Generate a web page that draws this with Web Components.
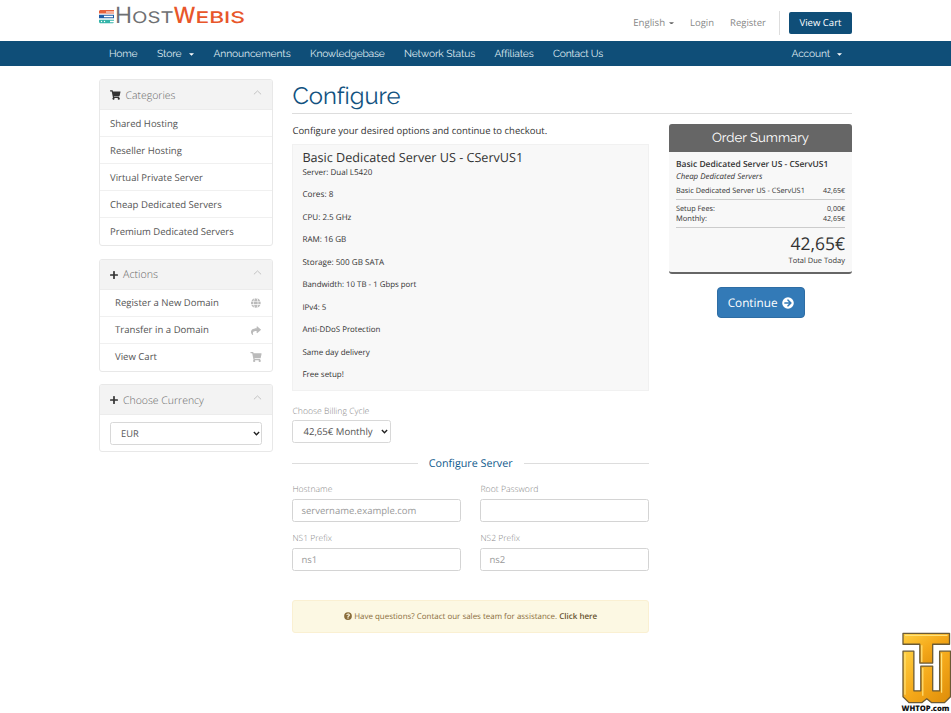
<!DOCTYPE html>
<html lang="en">
<head>
<meta charset="utf-8">
<title>Configure - HostWebis</title>
<style>
html,body{margin:0;background:#fff}
body{font-family:"Open Sans",sans-serif;font-size:9.25px;color:#333;width:951px;height:713px;overflow:hidden;position:relative;text-rendering:geometricPrecision}
main{display:flex;gap:20px;width:753px;margin:0 0 0 99px;padding-top:13px}
aside{flex:0 0 174px;margin-right:-.6px}
</style>
</head>
<body>
<site-header></site-header>
<site-nav></site-nav>
<main>
  <aside>
    <side-panel icon="cart" label="Categories" w="50">
      <side-item><t-x w="68">Shared Hosting</t-x></side-item>
      <side-item><t-x w="72">Reseller Hosting</t-x></side-item>
      <side-item><t-x w="93">Virtual Private Server</t-x></side-item>
      <side-item><t-x w="112">Cheap Dedicated Servers</t-x></side-item>
      <side-item><t-x w="124">Premium Dedicated Servers</t-x></side-item>
    </side-panel>
    <side-panel icon="plus" label="Actions" w="35">
      <side-item icon="globe"><t-x w="104">Register a New Domain</t-x></side-item>
      <side-item icon="share"><t-x w="94">Transfer in a Domain</t-x></side-item>
      <side-item icon="cart"><t-x w="42">View Cart</t-x></side-item>
    </side-panel>
    <side-panel icon="plus" label="Choose Currency" w="81">
      <select-box style="margin:6.500px 10px 6px" pad="11" label="EUR"></select-box>
    </side-panel>
  </aside>
  <config-page></config-page>
</main>
<brand-badge></brand-badge>
<script>
const ICONS = {
  cart: ['0 0 576 512','<path d="M528 301 575 93c4-15-8-29-23-29H160l-9-45C148 8 138 0 127 0H24C11 0 0 11 0 24v16c0 13 11 24 24 24h70l70 343a56 56 0 1 0 67 9h210a56 56 0 1 0 64-10l5-25c4-15-8-29-23-29H218l-7-32h293c11 0 21-8 24-19z"/>'],
  plus: ['0 0 448 512','<path d="M416 208H272V64c0-18-14-32-32-32h-32c-18 0-32 14-32 32v144H32c-18 0-32 14-32 32v32c0 18 14 32 32 32h144v144c0 18 14 32 32 32h32c18 0 32-14 32-32V304h144c18 0 32-14 32-32v-32c0-18-14-32-32-32z"/>'],
  globe: ['0 0 512 512','<path d="M336 160C322 66 287 8 248 8s-74 58-88 152zM152 256c0 22 1 44 3 64h186a650 650 0 0 0 0-128H155c-2 20-3 42-3 64zm325-96A249 249 0 0 0 319 18c24 34 41 85 50 142zM177 18A248 248 0 0 0 19 160h108c9-57 26-108 50-142zM487 192H373a683 683 0 0 1 0 128h114a247 247 0 0 0 0-128zM120 256c0-22 1-43 3-64H9a249 249 0 0 0 0 128h114c-2-21-3-42-3-64zm40 96c14 94 49 152 88 152s74-58 88-152zm159 142a248 248 0 0 0 158-142H369c-9 57-26 108-50 142zM19 352a249 249 0 0 0 158 142c-24-34-41-85-50-142z"/>'],
  share: ['0 0 512 512','<path d="M504 226 328 74c-15-13-40-2-40 18v80C127 174 0 206 0 358c0 61 39 122 83 154 14 10 33-3 28-19-45-145 22-184 177-186v88c0 20 25 31 40 18l176-152c11-9 11-26 0-35z"/>'],
  arrow: ['0 0 512 512','<path fill-rule="evenodd" d="M256 8a248 248 0 1 1 0 496 248 248 0 0 1 0-496zm-29 144 71 72H120c-13 0-24 11-24 24v16c0 13 11 24 24 24h178l-71 72c-9 10-9 25 0 34l11 11c10 9 25 9 34 0l132-132c9-9 9-24 0-34L272 107c-9-9-24-9-34 0l-11 11c-9 9-9 25 0 34z"/>'],
  question: ['0 0 512 512','<path fill-rule="evenodd" d="M256 8a248 248 0 1 1 0 496 248 248 0 0 1 0-496zm8 82c-55 0-90 23-117 64-4 5-2 12 3 16l34 27c6 4 13 3 17-2 18-23 30-36 58-36 20 0 46 13 46 33 0 15-12 23-32 34-24 13-55 30-55 71v6c0 7 5 12 12 12h56c7 0 12-5 12-12v-1c0-29 84-30 84-109 0-59-61-103-118-103zm-8 248a46 46 0 1 0 0 92 46 46 0 0 0 0-92z"/>'],
  up: ['0 0 12 7','<path d="M1 6 6 1.3 11 6" fill="none" stroke="currentColor" stroke-width="1.200"/>'],
  down: ['0 0 12 8','<path d="M1.500 1.500 6 6l4.500-4.500" fill="none" stroke="currentColor" stroke-width="2.400"/>'],
  caret: ['0 0 8 4','<path d="M0 0h8L4 4z"/>']
};
function define(name, render) {
  customElements.define(name, class extends HTMLElement {
    constructor() { super(); this.attachShadow({mode: 'open'}); }
    connectedCallback() {
      if (this.shadowRoot.firstChild) return;
      const t = document.createElement('template');
      t.innerHTML = render(this);
      this.shadowRoot.append(t.content.cloneNode(true));
      if (this.hasAttribute('w') && name === 't-x') fit(this);
    }
  });
}
/* Sets a label to a given width: by font size, or by tracking when "ls" is present. */
function fit(el) {
  const w = +el.getAttribute('w'), s = el.shadowRoot.querySelector('span');
  const n = s.getBoundingClientRect().width;
  if (!n) return;
  if (el.hasAttribute('ls')) s.style.letterSpacing = (w - n) / el.textContent.length + 'px';
  else s.style.fontSize = parseFloat(getComputedStyle(s).fontSize) * w / n + 'px';
}
define('t-x', () => `<style>:host{display:inline-block;white-space:nowrap;flex:none}</style><span><slot></slot></span>`);
define('ui-icon', e => { const [vb, d] = ICONS[e.getAttribute('name')];
  return `<style>:host{display:inline-block;flex:none;line-height:0}svg{display:block;width:100%;height:100%;fill:currentColor}</style><svg viewBox="${vb}">${d}</svg>`; });

define('site-logo', () => `<style>
:host{display:block;width:147px;height:28px}
svg{display:block}text{font-family:"Inter",sans-serif}
.h{fill:#6e7073;font-weight:400}.w{fill:#e8562a;font-weight:500}
</style><svg width="147" height="28" viewBox="0 0 147 28"><g transform="translate(0 9.500)"><path fill="#e5603a" d="M1 .5h6v3.500H0V1.500zM7 .5h8V2H7z"/><path fill="#e5603a" d="M7 3h8v1H7z"/><path fill="#1d5da6" d="M0 5.300h5v3.500H0zM5 5.300h10v1H5zM5 7.800h10v1H5zM14 6h1v2h-1z"/><path fill="#35b5aa" d="M0 10.200h11v3.500H1l-1-1zM11 10.200h4v1h-4zM11 12.700h4l-1 1h-3z"/><circle cx="2.500" cy="12" r=".7" fill="#fff"/><circle cx="5.500" cy="12" r=".7" fill="#fff"/></g>
<text class="h" x="16" y="23" font-size="22.500" textLength="17" lengthAdjust="spacingAndGlyphs">H</text><text class="h" x="33" y="23" font-size="16" textLength="41.500" lengthAdjust="spacingAndGlyphs">OST</text><text class="w" x="74.500" y="23" font-size="22.500" textLength="22" lengthAdjust="spacingAndGlyphs">W</text><text class="w" x="96.500" y="23" font-size="16" textLength="49.500" lengthAdjust="spacingAndGlyphs">EBIS</text></svg>`);

define('site-header', () => `<style>
:host{display:flex;width:753px;height:41px;margin-left:99px;justify-content:space-between;color:#888}
nav{display:flex;align-items:center;height:45px}
nav > t-x{margin-bottom:1px}
ui-icon{width:5px;height:2.800px;margin:1px 16px 0 4px;color:#666}
.l{margin-right:16px}
.b{display:flex;align-items:center;height:24px;border-left:1px solid #ddd;padding-left:9px;margin-left:-3px}
button{all:unset;box-sizing:border-box;width:63px;height:22px;background:#0f4e78;border-radius:2px;color:#fff;text-align:center;line-height:22px}
</style><site-logo></site-logo><nav><t-x w="32">English</t-x><ui-icon name="caret"></ui-icon><t-x class="l" w="24">Login</t-x><t-x class="l" w="36">Register</t-x><div class="b"><button><t-x w="42">View Cart</t-x></button></div></nav>`);

define('site-nav', () => `<style>
:host{display:block;height:25px;background:#0f4e78;color:#dfe9f0;font-family:Raleway,Lato,sans-serif;font-size:10.300px}
nav{display:flex;align-items:center;width:743px;height:25px;padding:0 0 0 10px;margin-left:99px}
t-x{margin-right:19.500px}ui-icon{width:5px;height:2.800px;margin:2px 20px 0 -12.500px;color:#fff}
.a{margin-left:auto}nav ui-icon:last-child{margin-right:10px}
</style><nav><t-x w="28.500" ls>Home</t-x><t-x w="24.500" ls>Store</t-x><ui-icon name="caret"></ui-icon><t-x w="77" ls>Announcements</t-x><t-x w="74.500" ls>Knowledgebase</t-x><t-x w="71" ls>Network Status</t-x><t-x w="37.500" ls>Affiliates</t-x><t-x w="50" ls>Contact Us</t-x><t-x class="a" w="38.500" ls>Account</t-x><ui-icon name="caret"></ui-icon></nav>`);

define('side-panel', e => `<style>
:host{display:block;box-sizing:border-box;border:1px solid #e8e8e8;border-radius:3px;margin-bottom:12.500px;overflow:hidden;background:#fff}
header{display:flex;align-items:center;padding:0 10px;background:#f3f3f3;border-bottom:1px solid #ececec;box-sizing:border-box;height:30px;color:#666;font-weight:300;font-size:10.500px}
header t-x{margin-top:2px}
.i{width:${e.getAttribute('icon')==='cart'?10.5:8}px;height:10px;margin-right:5px;margin-top:1px;color:#333}
.u{width:9px;height:5px;margin:-4px 0 0 auto;color:#bbb}
</style><header><ui-icon class="i" name="${e.getAttribute('icon')}"></ui-icon><t-x w="${e.getAttribute('w')}">${e.getAttribute('label')}</t-x><ui-icon class="u" name="up"></ui-icon></header><slot></slot>`);

define('side-item', e => { const i = e.getAttribute('icon'); return `<style>
:host{display:flex;align-items:center;justify-content:space-between;box-sizing:border-box;height:27px;padding:0 10px 0 ${i?15:10}px;color:#555;border-bottom:1px solid #f0f0f0}
:host(:last-of-type){border-bottom-color:transparent}
::slotted(t-x){margin-top:${i?0:.8}px}
ui-icon{width:12px;height:10px;color:#bbb}
</style><slot></slot>${i?`<ui-icon name="${i}"></ui-icon>`:''}`; });

define('select-box', e => `<style>
:host{display:grid;grid-template-columns:1fr;height:23px;align-items:center}
select{grid-area:1/1;appearance:none;width:100%;height:23px;box-sizing:border-box;border:1px solid #d8d8d8;border-radius:2.500px;background:#fff;color:#555;font:${e.getAttribute('fs')||9.3}px "Open Sans",sans-serif;text-rendering:inherit;padding:0 0 0 ${+e.getAttribute('pad')-1}px;margin:0}
ui-icon{grid-area:1/1;justify-self:end;width:7px;height:5px;margin-right:2.500px;color:#222;pointer-events:none}
</style><select><option>${e.getAttribute('label')}</option></select><ui-icon name="down"></ui-icon>`);

define('text-field', e => `<style>
:host{display:flex;flex-direction:column;color:#888}
label{height:15px;line-height:15.500px;margin-bottom:2px;font-weight:300;font-size:8.600px}
input{box-sizing:border-box;width:100%;height:23px;margin:0;border:1px solid #d4d4d4;border-radius:2.500px;padding:0 8px;font:9.500px "Open Sans",sans-serif;text-rendering:inherit;outline:0}
input::placeholder{color:#999}
</style><label><t-x w="${e.getAttribute('w')}">${e.getAttribute('label')}</t-x></label><input placeholder="${e.getAttribute('hint')||''}">`);

define('order-summary', () => `<style>
:host{display:block;width:183px}
section{box-sizing:border-box;height:149.500px;background:#f8f8f8;border-bottom:2px solid #666;border-radius:3px;overflow:hidden}
h2{margin:0;height:28px;background:#666;color:#fff;text-align:center;font:400 13.200px/29px Raleway,Lato,sans-serif}
.b{padding:4px 7px 0;font-size:7.500px}
.r{display:flex;justify-content:space-between;height:10.500px;line-height:11px}
.n{height:15px;line-height:17px;font-weight:600;font-size:8.600px}.c{height:10px;line-height:12px;font-style:italic}
.p{height:17px;line-height:20px}
.m{border-top:1px solid #ccc;border-bottom:1px solid #ccc;padding:3.500px 0 2.500px;margin-top:1px}
.t{text-align:right;font-size:17px;line-height:22px;height:22px;padding-top:4.500px}.d{text-align:right;line-height:12px;height:12px}
button{all:unset;display:flex;box-sizing:border-box;align-items:center;justify-content:center;gap:4px;width:88px;height:31px;margin:13.500px auto 0 47.600px;background:#337ab7;border:1px solid #2e6da4;border-radius:4px;color:#fff;font-size:12px}
button ui-icon{width:12px;height:12px}
</style><section><h2><t-x w="97" ls>Order Summary</t-x></h2><div class="b">
<div class="n"><t-x w="152.500">Basic Dedicated Server US - CServUS1</t-x></div>
<div class="c"><t-x w="86.500">Cheap Dedicated Servers</t-x></div>
<div class="r p"><t-x w="129">Basic Dedicated Server US - CServUS1</t-x><t-x w="22">42,65€</t-x></div>
<div class="m"><div class="r"><t-x w="39">Setup Fees:</t-x><t-x w="18">0,00€</t-x></div><div class="r"><t-x w="31">Monthly:</t-x><t-x w="22">42,65€</t-x></div></div>
<div class="t"><t-x w="54.500">42,65€</t-x></div><div class="d"><t-x w="56.500">Total Due Today</t-x></div>
</div></section><button><t-x w="50">Continue</t-x><ui-icon name="arrow"></ui-icon></button>`);

const SPECS = [['Server: Dual L5420',70],['Cores: 8',31],['CPU: 2.5 GHz',49],['RAM: 16 GB',44],['Storage: 500 GB SATA',82],['Bandwidth: 10 TB - 1 Gbps port',114],['IPv4: 5',24],['Anti-DDoS Protection',78],['Same day delivery',67.5],['Free setup!',41.5]];
define('config-page', () => `<style>
:host{display:block;flex:0 0 559.600px}
h1{margin:0;height:35px;border-bottom:1px solid #ddd;box-sizing:border-box;color:#12527f;font:400 23.800px/34px Raleway,Lato,sans-serif}
.cols{display:flex;justify-content:space-between;align-items:flex-start}
.left{width:356.600px}order-summary{margin-top:10px}
.intro{height:30px;line-height:33px}
.prod{box-sizing:border-box;height:247px;background:#f8f8f8;border:1px solid #f1f1f1;padding:2px 9px 0}
.name{font-size:13px;height:20px;line-height:21px}
.spec{font-size:8px;height:22.450px;line-height:11.800px}
.cyc{color:#888;font-weight:300;font-size:8.600px;height:15px;line-height:15px;margin:12.500px 0 1.500px}
.cyc + select-box{width:98.500px}
.sub{display:flex;align-items:center;gap:11px;height:16px;margin:12px 0 11px;color:#0f5a8c;font-size:10.600px}
.sub::before,.sub::after{content:"";flex:1;height:1px;background:#ddd}
.grid{display:grid;grid-template-columns:1fr 1fr;column-gap:19.500px;row-gap:8.500px}
.ask{display:flex;align-items:center;justify-content:center;box-sizing:border-box;height:33px;margin-top:29px;background:#fcf8e3;border:1px solid #faf0d2;border-radius:3px;color:#8a6d3b;font-size:7.900px}
.ask ui-icon{width:8px;height:8px;margin-right:2px}.ask b{color:#66512c;font-weight:600;margin-left:2px}
</style><h1><t-x w="107" ls>Configure</t-x></h1><div class="cols"><div class="left">
<div class="intro"><t-x w="255">Configure your desired options and continue to checkout.</t-x></div>
<div class="prod"><div class="name"><t-x w="221">Basic Dedicated Server US - CServUS1</t-x></div>${SPECS.map(([s,w])=>`<div class="spec"><t-x w="${w}">${s}</t-x></div>`).join('')}</div>
<div class="cyc"><t-x w="77">Choose Billing Cycle</t-x></div><select-box pad="11" fs="9.600" label="42,65€ Monthly"></select-box>
<div class="sub"><t-x w="84">Configure Server</t-x></div>
<div class="grid"><text-field label="Hostname" w="40" hint="servername.example.com"></text-field><text-field label="Root Password" w="58"></text-field><text-field label="NS1 Prefix" w="39.500" hint="ns1"></text-field><text-field label="NS2 Prefix" w="39.500" hint="ns2"></text-field></div>
<div class="ask"><ui-icon name="question"></ui-icon><t-x w="203">Have questions? Contact our sales team for assistance.</t-x><b><t-x w="38">Click here</t-x></b></div>
</div><order-summary></order-summary></div>`);

define('brand-badge', () => `<style>
:host{position:absolute;right:0;bottom:-1px;width:49.500px;height:82px;font-weight:800;font-size:7px;line-height:9px;color:#111}
svg{display:block;width:49.500px;height:73px}t-x{display:block}
</style><svg viewBox="0 0 50 73"><defs><linearGradient id="g" x1="0" y1="0" x2="1" y2="1"><stop offset="0" stop-color="#ffcf3f"/><stop offset=".5" stop-color="#f5a91a"/><stop offset="1" stop-color="#dd8c08"/></linearGradient></defs>
<g fill="url(#g)" stroke="#6b5a35" stroke-width="1.300" stroke-linejoin="round"><path d="M1 1h47v11H31v19H18V12H1z"/><path d="M1 19h11v40h7V34h12v25h7V19h11v46l-6 6H30l-5-4-5 4H7l-6-6z"/></g><path d="M3 3h43M3 21v42M20 13v17M21 36v28M40 21v40" stroke="#ffe27a" stroke-width="1.200" fill="none"/></svg><t-x w="48">WHTOP.com</t-x>`);
</script>
</body>
</html>
